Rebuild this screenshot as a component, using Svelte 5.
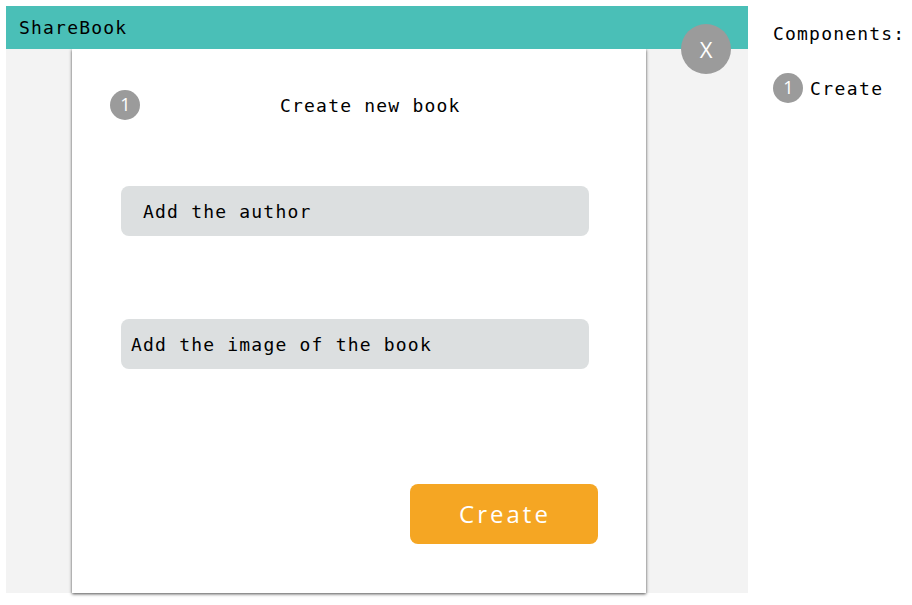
<script lang="ts">
  let components = [{ id: 1, name: 'Create' }]
</script>

<div class="screen">
  <div class="device">
    <header class="topbar">ShareBook</header>
    <button class="close">X</button>
    <main class="stage">
      <section class="card">
        <div class="card-head">
          <span class="marker">1</span>
          <h1>Create new book</h1>
        </div>
        <div class="field author">Add the author</div>
        <div class="field image">Add the image of the book</div>
        <div class="actions">
          <button class="create">Create</button>
        </div>
      </section>
    </main>
  </div>

  <aside class="legend">
    <h2>Components:</h2>
    {#each components as item (item.id)}
      <div class="legend-row">
        <span class="marker">{item.id}</span>
        <span class="legend-name">{item.name}</span>
      </div>
    {/each}
  </aside>
</div>

<style>
  :global(body) {
    margin: 0;
    background: #fff;
  }

  .screen {
    display: flex;
    width: 912px;
    height: 605px;
    padding: 6px 0 0 6px;
    box-sizing: border-box;
    font-family: "DejaVu Sans Mono", monospace;
    font-size: 18px;
    letter-spacing: 1.2px;
    color: #000;
    overflow: hidden;
  }

  .device {
    position: relative;
    display: flex;
    flex-direction: column;
    width: 742px;
    height: 587px;
    background: #f3f3f3;
    flex: none;
  }

  .topbar {
    position: relative;
    z-index: 1;
    height: 43px;
    line-height: 43px;
    padding-left: 13px;
    background: #4abfb7;
    flex: none;
  }

  .close {
    position: absolute;
    top: 18px;
    left: 675px;
    width: 50px;
    height: 50px;
    padding: 0;
    border: 0;
    border-radius: 50%;
    background: #9b9b9b;
    color: #fff;
    font-family: "Open Sans", sans-serif;
    font-size: 22px;
    z-index: 2;
  }

  .stage {
    flex: 1;
    display: flex;
    padding-left: 66px;
    min-height: 0;
  }

  .card {
    display: flex;
    flex-direction: column;
    width: 574px;
    background: #fff;
    box-shadow: 0 1px 3px 0 rgba(0, 0, 0, 0.7);
  }

  .card-head {
    position: relative;
    display: flex;
    align-items: center;
    height: 30px;
    margin-top: 41px;
    padding-left: 38px;
  }

  .card-head h1 {
    margin: 0 0 0 140px;
    font-size: 18px;
    font-weight: 400;
  }

  .marker {
    display: flex;
    align-items: center;
    justify-content: center;
    width: 30px;
    height: 30px;
    padding: 0 0 2px 1px;
    box-sizing: border-box;
    border-radius: 50%;
    background: #9b9b9b;
    color: #fff;
    font-family: "Open Sans", sans-serif;
    font-size: 18px;
    letter-spacing: 0;
    flex: none;
  }

  .field {
    width: 468px;
    height: 50px;
    margin-left: 49px;
    line-height: 52px;
    border-radius: 8px;
    background: #dcdfe0;
    box-sizing: border-box;
  }

  .author {
    margin-top: 66px;
    padding-left: 22px;
  }

  .image {
    margin-top: 83px;
    padding-left: 10px;
  }

  .actions {
    display: flex;
    justify-content: flex-end;
    margin-top: 115px;
    padding-right: 48px;
  }

  .create {
    width: 188px;
    height: 60px;
    padding: 0 0 2px 2px;
    border: 0;
    border-radius: 8px;
    background: #f5a623;
    color: #fff;
    font-family: "Open Sans", sans-serif;
    font-size: 24px;
    letter-spacing: 3px;
  }

  .legend {
    margin-left: 25px;
    padding-top: 14px;
  }

  .legend h2 {
    margin: 0;
    font-size: 18px;
    font-weight: 400;
    line-height: 27px;
    white-space: nowrap;
  }

  .legend-row {
    display: flex;
    align-items: center;
    gap: 7px;
    margin-top: 26px;
  }

  .legend-name {
    letter-spacing: 1.4px;
  }
</style>
